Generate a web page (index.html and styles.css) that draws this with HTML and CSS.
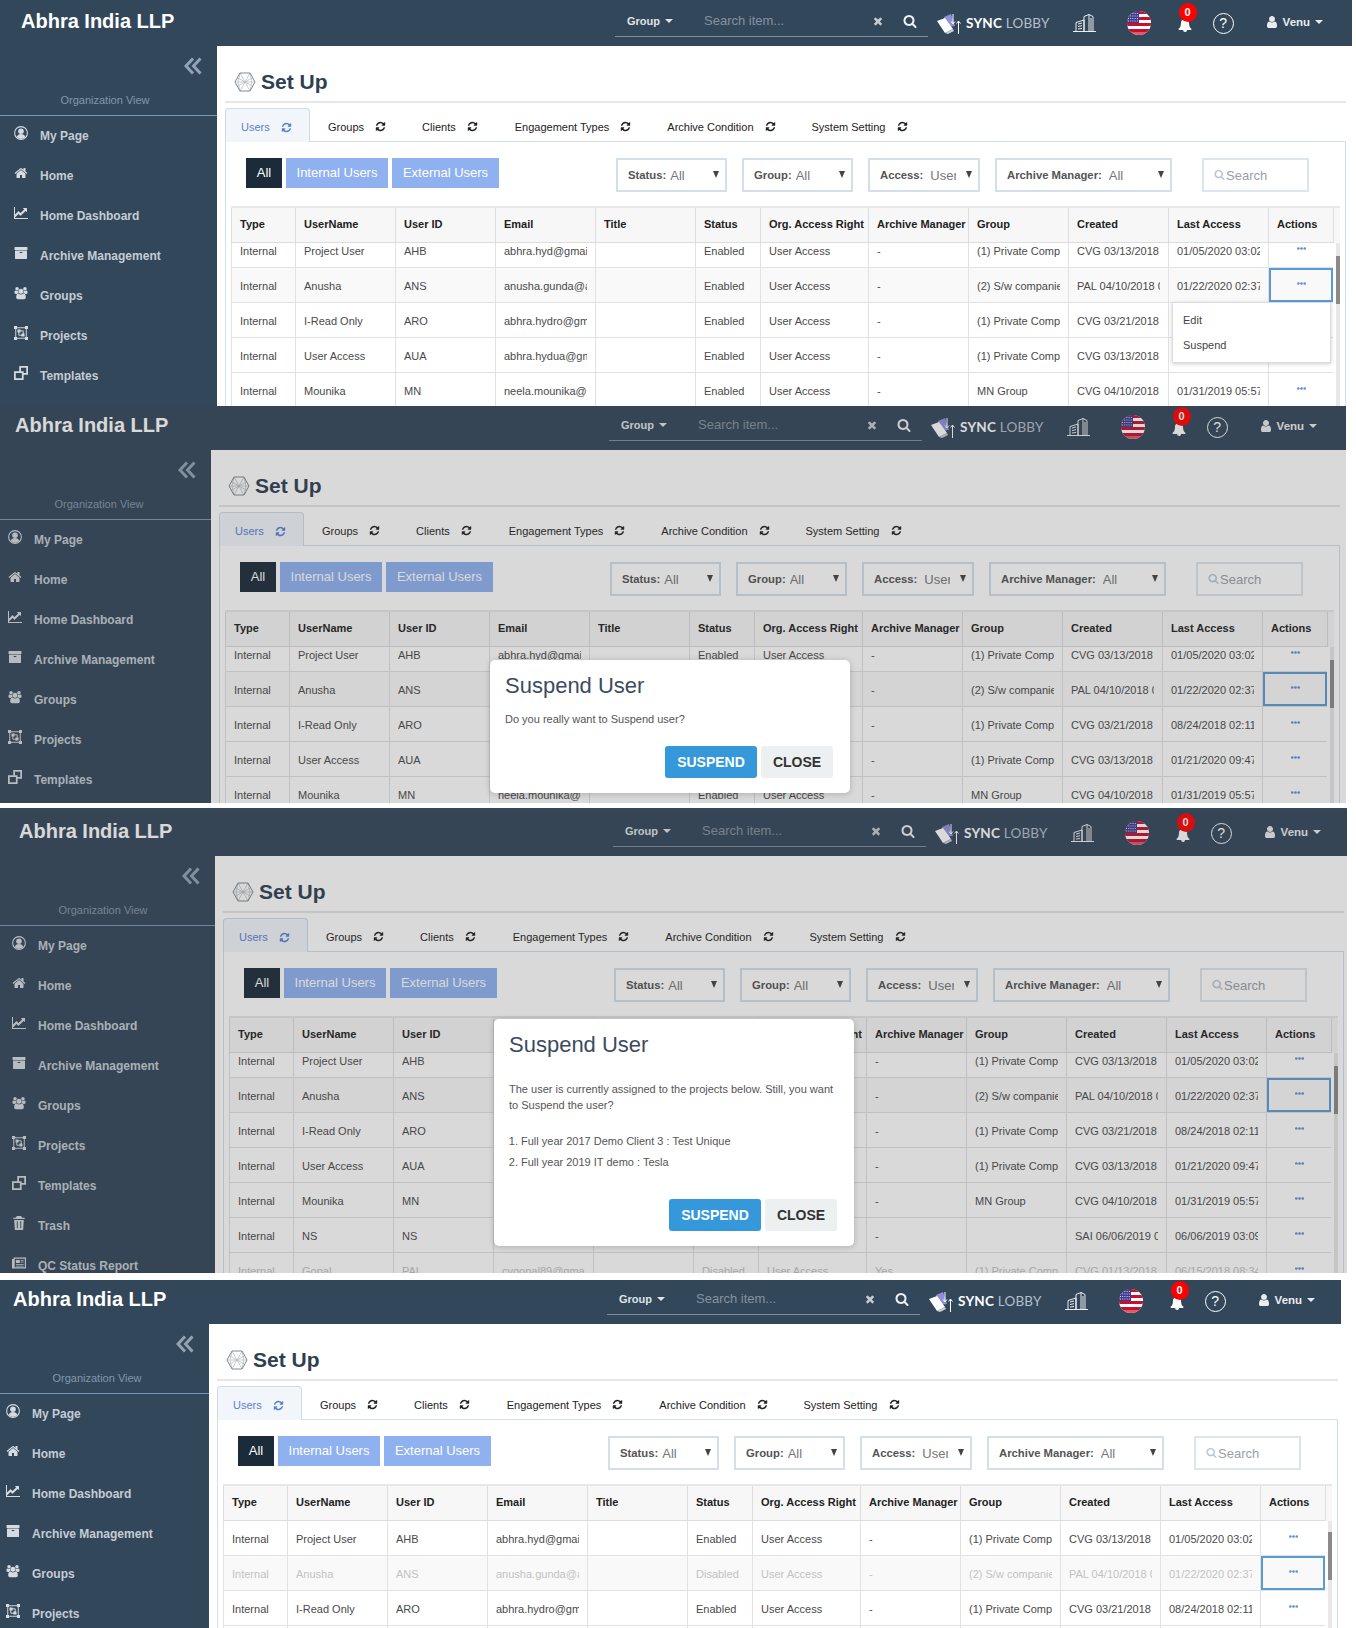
FILE: index.html
```html
<!DOCTYPE html>
<html>
<head>
    <title>Abhra India LLP - Set Up</title>
    <meta charset="utf-8">
    <link rel="stylesheet" href="styles.css">
</head>
<body>
    <svg class="sprite" xmlns="http://www.w3.org/2000/svg">
        <symbol id="i-refresh" viewBox="0 0 1792 1792"><path d="M1639 1056q0 5-1 7-64 268-268 434.5t-478 166.5q-146 0-282.5-55t-243.5-157l-129 129q-19 19-45 19t-45-19-19-45v-448q0-26 19-45t45-19h448q26 0 45 19t19 45-19 45l-137 137q71 66 161 102t187 36q134 0 250-65t186-179q11-17 53-117 8-23 30-23h192q13 0 22.5 9.5t9.5 22.5zm25-800v448q0 26-19 45t-45 19h-448q-26 0-45-19t-19-45 19-45l138-138q-148-137-349-137-134 0-250 65t-186 179q-11 17-53 117-8 23-30 23h-199q-13 0-22.5-9.5t-9.5-22.5v-7q65-268 270-434.5t480-166.5q146 0 284 55.5t245 156.5l130-129q19-19 45-19t45 19 19 45z"/></symbol>
        <symbol id="i-home" viewBox="0 0 1792 1792"><path d="M1472 992v480q0 26-19 45t-45 19h-384v-384h-256v384h-384q-26 0-45-19t-19-45v-480q0-1 .5-3t.5-3l575-474 575 474q1 2 1 6zm223-69l-62 74q-8 9-21 11h-3q-13 0-21-7l-692-577-692 577q-12 8-24 7-13-2-21-11l-62-74q-8-10-7-23.5t11-21.5l719-599q32-26 76-26t76 26l244 204v-195q0-14 9-23t23-9h192q14 0 23 9t9 23v408l219 182q10 8 11 21.5t-7 23.5z"/></symbol>
        <symbol id="i-chart" viewBox="0 0 1792 1792"><path d="M1792 1536v128h-1792v-1536h128v1408h1664zm-128-1248v435q0 21-19.5 29.5t-35.5-7.5l-121-121-633 633q-10 10-23 10t-23-10l-233-233-416 416-192-192 585-585q10-10 23-10t23 10l233 233 464-464-121-121q-16-16-7.5-35.5t29.5-19.5h435q14 0 23 9t9 23z"/></symbol>
        <symbol id="i-archive" viewBox="0 0 1792 1792"><path d="M1088 832q0-26-19-45t-45-19h-256q-26 0-45 19t-19 45 19 45 45 19h256q26 0 45-19t19-45zm576-192v960q0 26-19 45t-45 19h-1408q-26 0-45-19t-19-45v-960q0-26 19-45t45-19h1408q26 0 45 19t19 45zm64-448v256q0 26-19 45t-45 19h-1536q-26 0-45-19t-19-45v-256q0-26 19-45t45-19h1536q26 0 45 19t19 45z"/></symbol>
        <symbol id="i-users" viewBox="0 0 2048 1792"><path d="M657 896q-162 5-265 128h-134q-82 0-138-40.5t-56-118.5q0-353 124-353 6 0 43.5 21t97.5 42.5 119 21.5q67 0 133-23-5 37-5 66 0 139 81 256zm1071 637q0 120-73 189.5t-194 69.5h-874q-121 0-194-69.5t-73-189.5q0-53 3.5-103.5t14-109 26.5-108.5 43-97.5 62-81 85.5-53.5 111.5-20q10 0 43 21.5t73 48 107 48 135 21.5 135-21.5 107-48 73-48 43-21.5q61 0 111.5 20t85.5 53.5 62 81 43 97.5 26.5 108.5 14 109 3.5 103.5zm-1024-1277q0 106-75 181t-181 75-181-75-75-181 75-181 181-75 181 75 75 181zm704 384q0 159-112.5 271.5t-271.5 112.5-271.5-112.5-112.5-271.5 112.5-271.5 271.5-112.5 271.5 112.5 112.5 271.5zm576 225q0 78-56 118.5t-138 40.5h-134q-103-123-265-128 81-117 81-256 0-29-5-66 66 23 133 23 59 0 119-21.5t97.5-42.5 43.5-21q124 0 124 353zm-128-609q0 106-75 181t-181 75-181-75-75-181 75-181 181-75 181 75 75 181z"/></symbol>
        <symbol id="i-user" viewBox="0 0 1792 1792"><path d="M1536 1399q0 109-62.5 187t-150.5 78h-854q-88 0-150.5-78t-62.5-187q0-85 8.5-160.5t31.5-152 58.5-131 94-89 134.5-34.5q131 128 313 128t313-128q76 0 134.5 34.5t94 89 58.5 131 31.5 152 8.5 160.5zm-256-887q0 159-112.5 271.5t-271.5 112.5-271.5-112.5-112.5-271.5 112.5-271.5 271.5-112.5 271.5 112.5 112.5 271.5z"/></symbol>
        <symbol id="i-search" viewBox="0 0 1792 1792"><path d="M1216 832q0-185-131.5-316.5t-316.5-131.5-316.5 131.5-131.5 316.5 131.5 316.5 316.5 131.5 316.5-131.5 131.5-316.5zm512 832q0 52-38 90t-90 38q-54 0-90-38l-343-342q-179 124-399 124-143 0-273.5-55.5t-225-150-150-225-55.5-273.5 55.5-273.5 150-225 225-150 273.5-55.5 273.5 55.5 225 150 150 225 55.5 273.5q0 220-124 399l343 343q37 37 37 90z"/></symbol>
        <symbol id="i-times" viewBox="0 0 1792 1792"><path d="M1490 1322q0 40-28 68l-136 136q-28 28-68 28t-68-28l-294-294-294 294q-28 28-68 28t-68-28l-136-136q-28-28-28-68t28-68l294-294-294-294q-28-28-28-68t28-68l136-136q28-28 68-28t68 28l294 294 294-294q28-28 68-28t68 28l136 136q28 28 28 68t-28 68l-294 294 294 294q28 28 28 68z"/></symbol>
        <symbol id="i-bell" viewBox="0 0 1792 1792"><path d="M912 1696q0-16-16-16-59 0-101.5-42.5t-42.5-101.5q0-16-16-16t-16 16q0 73 51.5 124.5t124.5 51.5q16 0 16-16zm816-288q0 52-38 90t-90 38h-448q0 106-75 181t-181 75-181-75-75-181h-448q-52 0-90-38t-38-90q50-42 91-88t85-119.5 74.5-158.5 50-206 19.5-260q0-152 117-282.5t307-158.5q-8-19-8-39 0-40 28-68t68-28 68 28 28 68q0 20-8 39 190 28 307 158.5t117 282.5q0 139 19.5 260t50 206 74.5 158.5 85 119.5 91 88z"/></symbol>
        <symbol id="i-profile" viewBox="0 0 16 16"><circle cx="8" cy="8" r="7.300" fill="none" stroke="currentColor" stroke-width="1.200"/><circle cx="8" cy="6" r="3.200"/><path d="M3 12.600c.6-2.600 2.600-3.600 5-3.600s4.400 1 5 3.600c-1.300 1.300-3.200 2-5 2s-3.700-.7-5-2z"/></symbol>
        <symbol id="i-projects" viewBox="0 0 16 16"><path fill="none" stroke="currentColor" stroke-width="1.100" d="M2 2h12v12h-12zM5.500 5.500h5v5h-5z"/><path d="M0 0h3.500v3.500h-3.500zM12.500 0h3.500v3.500h-3.500zM0 12.500h3.500v3.500h-3.500zM12.500 12.500h3.500v3.500h-3.500zM4 4h3.500v3.500h-3.500zM8.500 8.500h3.500v3.500h-3.500z"/></symbol>
        <symbol id="i-templates" viewBox="0 0 16 16"><path fill-rule="evenodd" d="M6 0h10v10h-5v6h-11v-10h6zM8 2v4h3v2h3v-6zM2 8v6h7v-6z"/></symbol>
        <symbol id="i-trash" viewBox="0 0 16 16"><path fill-rule="evenodd" d="M5.500 0h5l1 2h3v1.500h-13v-1.500h3zM2.500 4.500h11l-.8 11.500h-9.400zM5.500 6v8h1v-8zM9.500 6v8h1v-8z"/></symbol>
        <symbol id="i-report" viewBox="0 0 18 14"><path fill-rule="evenodd" d="M0 2h2v-2h16v14h-18zM3.500 1.500v11h13v-11zM5 3h5v4h-5zM11 3h4v1h-4zM11 5.500h4v1h-4zM5 8.500h10v1h-10zM5 10.500h10v1h-10z"/></symbol>
        <symbol id="i-dots" viewBox="0 0 9 3"><circle cx="1.300" cy="1.500" r="1.300"/><circle cx="4.500" cy="1.500" r="1.300"/><circle cx="7.700" cy="1.500" r="1.300"/></symbol>
        <symbol id="i-hex" viewBox="0 0 22 20">
            <g fill="none" stroke="#b4b8bc" stroke-width=".7"><path d="M6 1l10 18M16 1l-10 18M1 10h20M6 1l-2 9 2 9M16 1l2 9-2 9M3 5.500l16 9M19 5.500l-16 9"/></g>
            <path fill="none" stroke="#7f8a90" stroke-width="1" d="M6 1h10l5 9-5 9h-10l-5-9z"/>
        </symbol>
        <symbol id="i-logo" viewBox="0 0 25 20"><path fill="#8f8fdc" d="M7 3l7-3 4 12-8 1z"/><path fill="#fff" d="M0 7l8-3 8 11-8 4z"/><path fill="#c9ced6" d="M8 19l8-4 1 2-6 3z"/><path fill="none" stroke="#fff" d="M16 0v10M14 7.500l2 2.500 2-2.500M21.500 20v-13M19.500 9.500l2-2.500 2 2.500"/></symbol>
        <symbol id="i-building" viewBox="0 0 23 18"><path fill="none" stroke="#fff" stroke-width=".9" d="M0 17.500h23M3 17.500v-9l8-2.500v11.500M11 17.500v-15l5-2v17M16 .5l4 2v15M5 10l4-1M5 12.500l4-.8M5 15l4-.5M18 4v13.500"/></symbol>
        <symbol id="i-flag" viewBox="0 0 24 24">
            <rect width="24" height="24" fill="#fff"/>
            <path fill="#c8102e" d="M0 0h24v3h-24zM0 6h24v3h-24zM0 12h24v3h-24zM0 18h24v3h-24z"/>
            <rect y="21" width="24" height="3" fill="#e0566b"/>
            <rect width="12" height="12" fill="#3c3b8e"/>
            <path stroke="#d7d7f0" stroke-dasharray="1 1.200" d="M1 2.500h10M1 5h10M1 7.500h10M1 10h10"/>
        </symbol>
    </svg>

    <!-- the four states of the same page, captured one below the other -->
    <section class="shot shot-menu" data-suspended="">
        <div class="app">
            <div class="row-menu">
                <a>Edit</a>
                <a>Suspend</a>
            </div>
        </div>
    </section>

    <section class="shot shot-confirm" data-suspended="">
        <div class="app">
            <div class="backdrop">
                <div class="modal">
                    <h2>Suspend User</h2>
                    <p>Do you really want to Suspend user?</p>
                    <div class="modal-actions">
                        <button class="btn-suspend">SUSPEND</button>
                        <button class="btn-close">CLOSE</button>
                    </div>
                </div>
            </div>
        </div>
    </section>

    <section class="shot shot-assigned" data-suspended="">
        <div class="app">
            <div class="backdrop">
                <div class="modal">
                    <h2>Suspend User</h2>
                    <p>The user is currently assigned to the projects below. Still, you want to Suspend the user?</p>
                    <ol>
                        <li>Full year 2017 Demo Client 3 : Test Unique</li>
                        <li>Full year 2019 IT demo : Tesla</li>
                    </ol>
                    <div class="modal-actions">
                        <button class="btn-suspend">SUSPEND</button>
                        <button class="btn-close">CLOSE</button>
                    </div>
                </div>
            </div>
        </div>
    </section>

    <section class="shot shot-done" data-suspended="ANS">
        <div class="app"></div>
    </section>

    <template id="page">
        <header class="topbar">
            <div class="brand">Abhra India LLP</div>
            <div class="search-bar">
                <span class="search-group">Group <i class="caret"></i></span>
                <span class="search-hint">Search item...</span>
                <svg class="icon icon-clear"><use href="#i-times"/></svg>
                <svg class="icon icon-find"><use href="#i-search"/></svg>
            </div>
            <div class="logo">
                <svg class="logo-mark"><use href="#i-logo"/></svg>
                <span class="logo-text"><b>SYNC</b> LOBBY</span>
            </div>
            <svg class="building"><use href="#i-building"/></svg>
            <svg class="flag"><use href="#i-flag"/></svg>
            <div class="bell">
                <svg class="icon"><use href="#i-bell"/></svg>
                <span class="badge">0</span>
            </div>
            <span class="help">?</span>
            <div class="account">
                <svg class="icon"><use href="#i-user"/></svg>
                <span>Venu</span>
                <i class="caret"></i>
            </div>
        </header>
        <div class="layout">
            <aside class="sidebar">
                <div class="side-head">
                    <svg class="collapse" viewBox="0 0 18 18"><path fill="none" stroke="currentColor" stroke-width="3" d="M9 1.500l-7 7.500 7 7.500M16.500 1.500l-7 7.500 7 7.500"/></svg>
                    <div class="side-title">Organization View</div>
                </div>
                <nav class="side-nav">
                    <a><svg><use href="#i-profile"/></svg>My Page</a>
                    <a><svg><use href="#i-home"/></svg>Home</a>
                    <a><svg><use href="#i-chart"/></svg>Home Dashboard</a>
                    <a><svg><use href="#i-archive"/></svg>Archive Management</a>
                    <a><svg><use href="#i-users"/></svg>Groups</a>
                    <a><svg><use href="#i-projects"/></svg>Projects</a>
                    <a><svg><use href="#i-templates"/></svg>Templates</a>
                    <a><svg><use href="#i-trash"/></svg>Trash</a>
                    <a><svg><use href="#i-report"/></svg>QC Status Report</a>
                </nav>
            </aside>
            <main class="content">
                <div class="page-title">
                    <svg class="hex"><use href="#i-hex"/></svg>
                    <h1>Set Up</h1>
                </div>
                <div class="tabs">
                    <a class="tab active">Users <svg><use href="#i-refresh"/></svg></a>
                    <a class="tab">Groups <svg><use href="#i-refresh"/></svg></a>
                    <a class="tab">Clients <svg><use href="#i-refresh"/></svg></a>
                    <a class="tab">Engagement Types <svg><use href="#i-refresh"/></svg></a>
                    <a class="tab">Archive Condition <svg><use href="#i-refresh"/></svg></a>
                    <a class="tab">System Setting <svg><use href="#i-refresh"/></svg></a>
                </div>
                <div class="panel">
                    <div class="toolbar">
                        <button class="pill pill-all">All</button>
                        <button class="pill pill-internal">Internal Users</button>
                        <button class="pill pill-external">External Users</button>
                        <div class="filter filter-status"><b>Status:</b><span>All</span><i></i></div>
                        <div class="filter filter-group"><b>Group:</b><span>All</span><i></i></div>
                        <div class="filter filter-access"><b>Access:</b><span>User Access</span><i></i></div>
                        <div class="filter filter-manager"><b>Archive Manager:</b><span>All</span><i></i></div>
                        <div class="filter-search"><svg><use href="#i-search"/></svg>Search</div>
                    </div>
                    <div class="grid">
                        <table class="grid-head">
                            <tr>
                                <th>Type</th><th>UserName</th><th>User ID</th><th>Email</th><th>Title</th><th>Status</th>
                                <th>Org. Access Right</th><th>Archive Manager</th><th>Group</th><th>Created</th><th>Last Access</th><th>Actions</th>
                            </tr>
                        </table>
                        <div class="grid-scroll">
                            <div class="grid-rows">
                                <table class="grid-body"><tbody></tbody></table>
                            </div>
                            <div class="scrollbar"><div class="thumb"></div></div>
                        </div>
                    </div>
                </div>
            </main>
        </div>
    </template>

    <script src="script.js"></script>
</body>
</html>
```
FILE: styles.css
```css
* {
    box-sizing: border-box;
}
body {
    margin: 0;
    background: white;
    font-family: "Liberation Sans", Arial, sans-serif;
    font-size: 11px;
    overflow: hidden;
}
.sprite {
    display: none;
}
svg {
    fill: currentColor;
    flex: none;
}

/* one captured state */
.shot {
    overflow: hidden;
}
.shot-menu {
    width: 1352px;
    height: 406px;
}
.shot-confirm {
    width: 1349px;
    height: 397px;
}
.shot-assigned {
    width: 1347px;
    height: 465px;
    margin-top: 5px;
    padding-top: 2px;
    background: #374859;
}
.shot-done {
    width: 1341px;
    height: 348px;
    margin-top: 7px;
}
.app {
    position: relative;
    width: 1352px;
    height: 600px;
    background: white;
}
.shot-confirm .app {
    margin: -2px 0 0 -6px;
}
.shot-assigned .app {
    margin-left: -2px;
}
.shot-done .app {
    margin: -2px 0 0 -8px;
}

/* top bar */
.topbar {
    display: flex;
    align-items: center;
    height: 46px;
    background: #33475b;
    color: white;
}
.brand {
    width: 615px;
    padding: 0 0 4px 21px;
    font-size: 20px;
    font-weight: bold;
}
.search-bar {
    display: flex;
    align-items: center;
    align-self: flex-start;
    width: 313px;
    height: 37px;
    padding-top: 5px;
    border-bottom: 1px solid #7f8e9e;
}
.search-group {
    width: 89px;
    padding-left: 12px;
    font-weight: bold;
    color: #dfe4e9;
}
.caret {
    display: inline-block;
    margin-left: 2px;
    vertical-align: 2px;
    border: 4px solid transparent;
    border-top-color: currentColor;
    border-bottom: 0;
}
.search-hint {
    flex: 1;
    font-size: 13px;
    color: #85929f;
}
.icon {
    width: 14px;
    height: 14px;
}
.icon-clear {
    width: 12px;
    height: 12px;
    color: #c3cbd3;
}
.icon-find {
    margin: 0 11px 0 19px;
    color: #eef1f4;
}
.logo {
    display: flex;
    align-items: center;
    margin-left: 9px;
}
.logo-mark {
    width: 25px;
    height: 20px;
    margin-top: 1px;
}
.logo-text {
    margin-left: 4px;
    font-family: Lato, sans-serif;
    font-size: 13.5px;
    letter-spacing: .2px;
    color: #b4bfca;
}
.logo-text b {
    color: white;
}
.building {
    width: 23px;
    height: 18px;
    margin-left: 23px;
}
.flag {
    width: 24px;
    height: 24px;
    margin-left: 31px;
    border-radius: 50%;
}
.bell {
    position: relative;
    margin-left: 27px;
    padding-top: 5px;
}
.badge {
    position: absolute;
    left: 1px;
    top: -10px;
    width: 18px;
    height: 19px;
    border-radius: 50%;
    background: #f00;
    font-weight: bold;
    line-height: 18px;
    text-align: center;
}
.help {
    width: 21px;
    height: 21px;
    margin-left: 21px;
    border: 1.5px solid white;
    border-radius: 50%;
    font-size: 14px;
    line-height: 18px;
    text-align: center;
}
.account {
    display: flex;
    align-items: center;
    margin-left: 31px;
    padding-bottom: 2px;
    font-size: 11.5px;
    font-weight: bold;
    color: #e9edf0;
}
.account span {
    margin-left: 4px;
}
.account .caret {
    margin-left: 5px;
    vertical-align: 0;
}

/* sidebar */
.layout {
    display: flex;
    height: 554px;
}
.sidebar {
    width: 217px;
    background: #33475b;
    color: #c4ccd4;
}
.side-head {
    display: flex;
    flex-direction: column;
    height: 70px;
    border-bottom: 1px solid #7a97b5;
}
.collapse {
    width: 18px;
    height: 18px;
    margin: 11px 0 0 184px;
    color: #93a3b3;
}
.side-title {
    margin: 19px 7px 0 0;
    color: #8296ab;
    text-align: center;
}
.side-nav a {
    display: flex;
    align-items: center;
    height: 40px;
    padding-left: 14px;
    font-size: 12px;
    font-weight: bold;
}
.side-nav svg {
    width: 14px;
    height: 14px;
    margin: -6px 12px 0 0;
    color: #d5dbe1;
}

/* page content */
.content {
    width: 1129px;
    padding-left: 8px;
    color: #333;
}
.page-title {
    display: flex;
    align-items: center;
    height: 57px;
    padding: 16px 0 0 9px;
    border-bottom: 2px solid #e6e6e6;
}
.hex {
    width: 22px;
    height: 20px;
}
.page-title h1 {
    margin: 0 0 0 5px;
    font-size: 21px;
    color: #2f3f52;
}
.tabs {
    display: flex;
    height: 34px;
    margin-top: 5px;
    border-bottom: 1px solid #d5dfe8;
}
.tab {
    display: flex;
    align-items: center;
    height: 34px;
    padding: 3px 0 0;
    color: #222;
}
.tab svg {
    width: 11px;
    height: 11px;
    margin-left: 11px;
}
.tab.active {
    width: 85px;
    padding-left: 15px;
    margin-right: 18px;
    background: #f2f5fa;
    border: 1px solid #cfdbe7;
    border-bottom: 0;
    border-radius: 4px 4px 0 0;
    color: #5a7fd6;
}
.tab:nth-child(2) {
    margin-right: 36px;
}
.tab:nth-child(3) {
    margin-right: 37px;
}
.tab:nth-child(4) {
    margin-right: 36px;
}
.tab:nth-child(5) {
    margin-right: 36px;
}
.panel {
    height: 460px;
    padding: 16px 5px 0;
    border: 1px solid #d5dfe8;
    border-top: 0;
}
.toolbar {
    display: flex;
    margin-bottom: 14px;
}
.pill {
    height: 30px;
    padding: 0 0 2px;
    border: none;
    font-family: inherit;
    font-size: 13px;
    color: white;
}
.pill-all {
    width: 36px;
    margin-left: 15px;
    background: #1c2b3a;
}
.pill-internal {
    width: 102px;
    margin-left: 4px;
    background: #8fb1ef;
}
.pill-external {
    width: 107px;
    margin: 0 117px 0 4px;
    background: #8fb1ef;
}
.filter {
    position: relative;
    display: flex;
    align-items: center;
    height: 34px;
    margin-right: 15px;
    padding-left: 10px;
    border: 2px solid #d3dfe9;
}
.filter b {
    font-size: 11.3px;
    color: #555;
}
.filter span {
    overflow: hidden;
    margin-left: 4px;
    font-size: 13px;
    color: #777;
    white-space: nowrap;
}
.filter i {
    position: absolute;
    right: 6px;
    top: 11px;
    border: 3.5px solid transparent;
    border-top: 7px solid #444;
    border-bottom: 0;
}
.filter-status {
    width: 111px;
}
.filter-group {
    width: 111px;
}
.filter-access {
    width: 112px;
}
.filter-access span {
    width: 26px;
    margin-left: 7px;
}
.filter-manager {
    width: 177px;
    margin-right: 30px;
}
.filter-manager span {
    margin-left: 7px;
}
.filter-search {
    display: flex;
    align-items: center;
    width: 107px;
    height: 34px;
    padding-left: 10px;
    border: 2px solid #dde6ee;
    font-size: 13px;
    color: #9aa0a6;
}
.filter-search svg {
    width: 11px;
    height: 11px;
    margin: -2px 1px 0 0;
    color: #bcc9d6;
}

/* users table */
.grid {
    width: 1109px;
    border-top: 2px solid #e8e8e8;
    background: #f7f7f7;
}
.grid table {
    width: 1102px;
    border-collapse: collapse;
    table-layout: fixed;
}
.grid th, .grid td {
    width: 100px;
}
.grid th:nth-child(1), .grid td:nth-child(1) {
    width: 64px;
}
.grid th:nth-child(6), .grid td:nth-child(6) {
    width: 65px;
}
.grid th:nth-child(7), .grid td:nth-child(7) {
    width: 108px;
}
.grid th:nth-child(12), .grid td:nth-child(12) {
    width: 65px;
}
.grid-head th {
    height: 34px;
    padding: 0 0 2px 8px;
    border: 1px solid #ddd;
    border-top: 0;
    background: #f7f7f7;
    color: #222;
    text-align: left;
    white-space: nowrap;
}
.grid-scroll {
    display: flex;
    background: white;
}
.grid-rows {
    overflow: hidden;
    width: 1102px;
}
.shot-menu .grid-body, .shot-confirm .grid-body, .shot-assigned .grid-body {
    margin-top: -10px;
}
.grid-body td {
    height: 35px;
    padding: 2px 8px 0 8px;
    border: 1px solid #e2e2e2;
    border-top: 0;
    color: #4a4a4a;
}
.grid-body tr:nth-child(2) {
    background: #f9f9f9;
}
.cell {
    overflow: hidden;
    white-space: nowrap;
}
.grid-body tr.off td {
    color: #c2c2c2;
}
.grid-body tr td:last-child {
    padding: 0;
    color: #5b8fd6;
    text-align: center;
}
.dots {
    display: block;
    width: 9px;
    height: 3px;
    margin: 0 auto 3px;
}
.grid-body td.focus {
    box-shadow: inset 0 0 0 2px #5b9bd5;
}
.scrollbar {
    width: 4px;
    margin-left: 3px;
    background: #e8e8e8;
}
.thumb {
    height: 48px;
    margin-top: 13px;
    background: #8a8a8a;
}
.shot-done .thumb {
    margin-top: 11px;
}

/* row action menu */
.row-menu {
    position: absolute;
    left: 1172px;
    top: 302px;
    z-index: 2;
    width: 159px;
    height: 61px;
    padding-top: 5px;
    background: white;
    border: 1px solid #ddd;
    box-shadow: 0 1px 4px rgba(0,0,0,0.2);
    color: #444;
}
.row-menu a {
    display: block;
    padding: 0 0 0 10px;
    line-height: 25px;
}

/* suspend dialogs */
.backdrop {
    position: absolute;
    left: 0;
    right: 0;
    top: 0;
    bottom: 0;
    z-index: 3;
    background: rgba(65,65,65,0.2);
}
.modal {
    display: flex;
    flex-direction: column;
    width: 360px;
    margin-left: 496px;
    padding: 0 17px 0 15px;
    background: white;
    border-radius: 5px;
    box-shadow: 0 1px 6px rgba(0,0,0,0.2);
    color: #555;
}
.shot-confirm .modal {
    height: 133px;
    margin-top: 256px;
}
.shot-assigned .modal {
    height: 227px;
    margin-top: 209px;
}
.modal h2 {
    margin: 13px 0 0;
    font-size: 22px;
    font-weight: normal;
    line-height: 26px;
    color: #3c4b5f;
}
.modal p {
    margin: 12px 0 0;
    line-height: 16px;
}
.shot-assigned .modal p {
    margin-top: 23px;
}
.modal ol {
    margin: 18px 0 0;
    padding-left: 12px;
}
.modal li {
    line-height: 21px;
}
.modal-actions {
    display: flex;
    justify-content: flex-end;
    gap: 4px;
    margin-top: auto;
    margin-bottom: 15px;
}
.modal button {
    height: 32px;
    border: none;
    border-radius: 3px;
    font-family: inherit;
    font-size: 14px;
    font-weight: bold;
}
.btn-suspend {
    width: 92px;
    background: #3498db;
    color: white;
}
.btn-close {
    width: 72px;
    background: #ecf0f1;
    color: #333;
}
```
FILE: script.js
```js
// columns: type, username, id, email, title, status, access, manager, group, created, last access
const USERS = [
    ['Internal', 'Project User', 'AHB', 'abhra.hyd@gmail.com', '', 'Enabled', 'User Access', '-', '(1) Private Company', 'CVG 03/13/2018 02:10', '01/05/2020 03:02 PM'],
    ['Internal', 'Anusha', 'ANS', 'anusha.gunda@abhra.com', '', 'Enabled', 'User Access', '-', '(2) S/w companies', 'PAL 04/10/2018 05:12', '01/22/2020 02:37 PM'],
    ['Internal', 'I-Read Only', 'ARO', 'abhra.hydro@gmail.com', '', 'Enabled', 'User Access', '-', '(1) Private Company', 'CVG 03/21/2018 11:20', '08/24/2018 02:11 PM'],
    ['Internal', 'User Access', 'AUA', 'abhra.hydua@gmail.com', '', 'Enabled', 'User Access', '-', '(1) Private Company', 'CVG 03/13/2018 02:14', '01/21/2020 09:47 AM'],
    ['Internal', 'Mounika', 'MN', 'neela.mounika@gmail.com', '', 'Enabled', 'User Access', '-', 'MN Group', 'CVG 04/10/2018 04:31', '01/31/2019 05:57 PM'],
    ['Internal', 'NS', 'NS', 'ns@gmail.com', '', 'Enabled', 'User Access', '-', '', 'SAI 06/06/2019 03:05', '06/06/2019 03:09 PM'],
    ['Internal', 'Gopal', 'PAL', 'cvgopal89@gmail.com', '', 'Disabled', 'User Access', 'Yes', '(1) Private Company', 'CVG 01/13/2018 06:40', '06/15/2018 08:34 AM']
];

function buildRows(tbody, suspendedId) {
    USERS.forEach(function (user, index) {
        const off = user[5] === 'Disabled' || user[2] === suspendedId;
        const tr = document.createElement('tr');
        if (off) {
            tr.className = 'off';
        }
        user.forEach(function (text, col) {
            const td = document.createElement('td');
            const cell = document.createElement('div');
            cell.className = 'cell';
            cell.textContent = col === 5 && off ? 'Disabled' : text;
            td.appendChild(cell);
            tr.appendChild(td);
        });
        const actions = document.createElement('td');
        if (index === 1) {
            actions.className = 'focus';
        }
        actions.innerHTML = '<svg class="dots"><use href="#i-dots"/></svg>';
        tr.appendChild(actions);
        tbody.appendChild(tr);
    });
}

document.querySelectorAll('.shot').forEach(function (shot) {
    const page = document.getElementById('page').content.cloneNode(true);
    buildRows(page.querySelector('.grid-body tbody'), shot.dataset.suspended);
    const app = shot.querySelector('.app');
    app.insertBefore(page, app.firstChild);
});
```
